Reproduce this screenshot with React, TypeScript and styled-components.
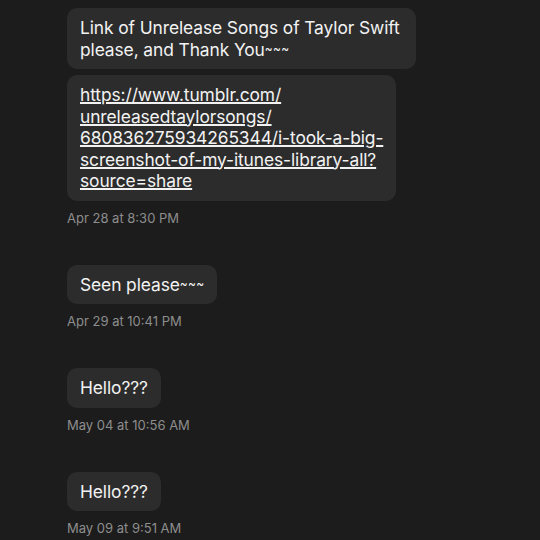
import React, { ReactElement, ReactNode } from 'react'
import styled, { createGlobalStyle } from 'styled-components'

const GlobalStyle = createGlobalStyle`
  html, body {
    margin: 0;
    padding: 0;
    background: #1c1c1c;
  }
  body {
    font-family: Inter, "Open Sans", "Liberation Sans", sans-serif;
    -webkit-font-smoothing: antialiased;
  }
`

type Message = {
  bubbles: { text: string[]; link?: boolean; wide?: boolean }[]
  time: string
}

const messages: Message[] = [
  {
    bubbles: [
      { wide: true, text: ['Link of Unrelease Songs of Taylor Swift', 'please, and Thank You~~~'] },
      {
        link: true,
        text: [
          'https://www.tumblr.com/',
          'unreleasedtaylorsongs/',
          '680836275934265344/i-took-a-big-',
          'screenshot-of-my-itunes-library-all?',
          'source=share',
        ],
      },
    ],
    time: 'Apr 28 at 8:30 PM',
  },
  { bubbles: [{ text: ['Seen please~~~'] }], time: 'Apr 29 at 10:41 PM' },
  { bubbles: [{ text: ['Hello???'] }], time: 'May 04 at 10:56 AM' },
  { bubbles: [{ text: ['Hello???'] }], time: 'May 09 at 9:51 AM' },
]

// tildes render small and raised in the original font
function withTildes(line: string): ReactNode {
  return line.split(/(~+)/).map((part, i) =>
    part.startsWith('~') ? <Tilde key={i}>{part}</Tilde> : part
  )
}

export default function App(): ReactElement {
  return (
    <>
      <GlobalStyle />
      <Thread>
        {messages.map((m, i) => (
          <Group key={i}>
            {m.bubbles.map((b, j) => (
              <Bubble key={j} $wide={b.wide}>
                {b.link ? (
                  <Link href="#">
                    {b.text.map((line, k) => (
                      <Line key={k}>{line}</Line>
                    ))}
                  </Link>
                ) : (
                  b.text.map((line, k) => <Line key={k}>{withTildes(line)}</Line>)
                )}
              </Bubble>
            ))}
            <Time>{m.time}</Time>
          </Group>
        ))}
      </Thread>
    </>
  )
}

const Thread = styled.div`
  display: flex;
  flex-direction: column;
  gap: 39px;
  padding: 8px 0 0 67px;
  height: 540px;
  box-sizing: border-box;
  overflow: hidden;
`

const Group = styled.div`
  display: flex;
  flex-direction: column;
  align-items: flex-start;
  gap: 6px;
`

const Bubble = styled.div<{ $wide?: boolean }>`
  background: #2c2c2c;
  border-radius: 10px;
  padding: 9px ${(p) => (p.$wide ? '16px' : '13px')} 9px 13px;
  color: #f2f2f2;
  font-size: 17.4px;
  line-height: 21.5px;
  letter-spacing: -0.1px;
`

const Line = styled.span`
  display: block;
  white-space: nowrap;
`

const Tilde = styled.span`
  font-size: 12px;
  line-height: 0;
  vertical-align: 3px;
  letter-spacing: 0.3px;
`

const Link = styled.a`
  color: #f2f2f2;
  span {
    text-decoration: underline;
    text-underline-offset: 2px;
    text-decoration-thickness: 1px;
  }
`

const Time = styled.div`
  margin-top: 3px;
  color: #8d8d8d;
  font-size: 13px;
  line-height: 16px;
`
